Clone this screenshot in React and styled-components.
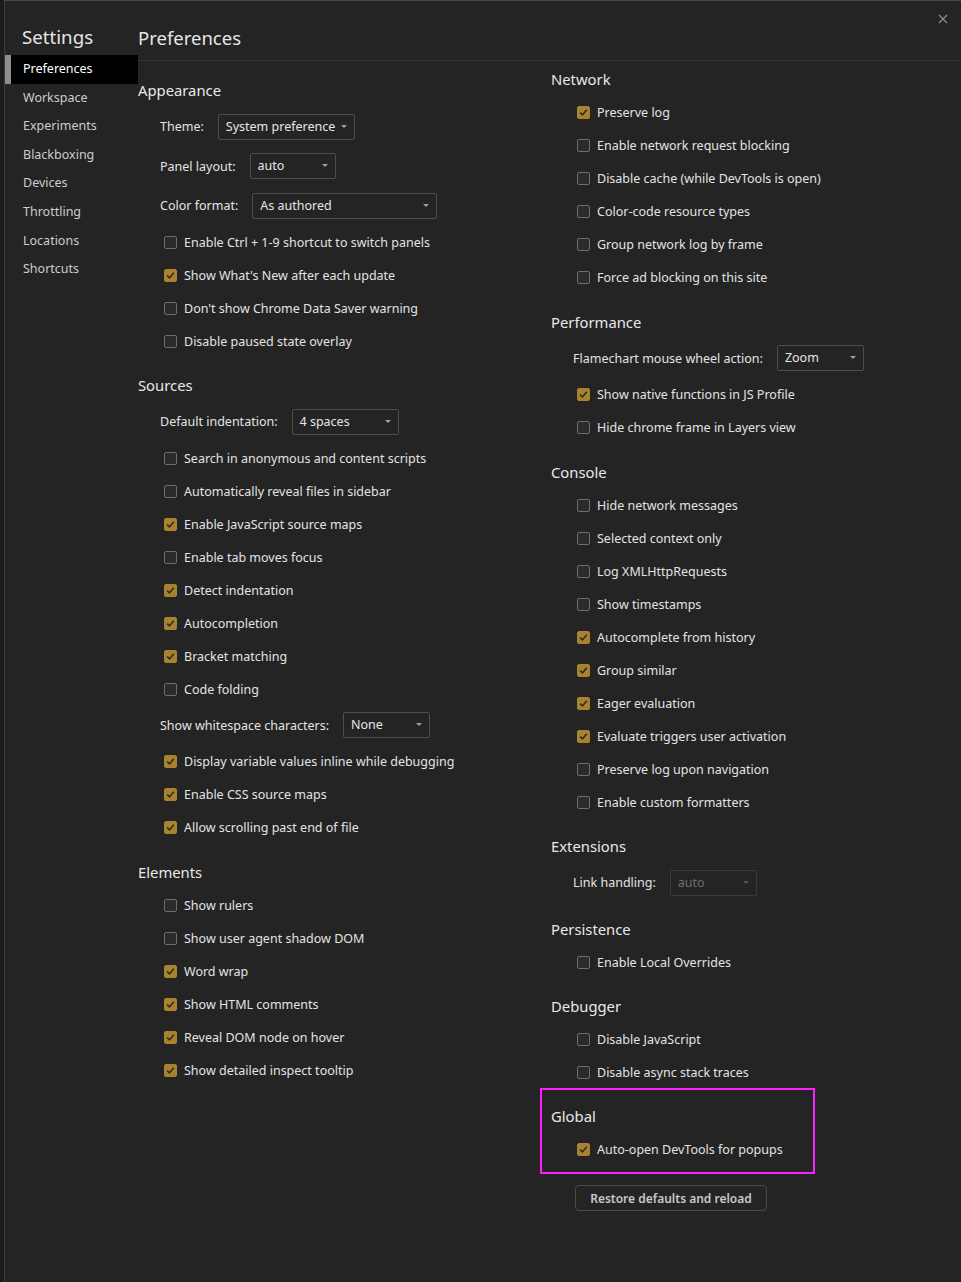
import styled, { createGlobalStyle } from "styled-components";

const GlobalStyle = createGlobalStyle`
  html, body {
    margin: 0;
    padding: 0;
    background: #1c1c1c;
  }
  body {
    font-family: "Noto Sans", "Open Sans", sans-serif;
    font-size: 12.5px;
    color: #e3e3e3;
  }
`;

const Window = styled.div`
  position: relative;
  margin-left: 4px;
  min-height: 1281px;
  background: #242424;
  border-top: 1px solid #4a4a4a;
  border-left: 1px solid #3c3c3c;
  display: flex;
`;

const Sidebar = styled.nav`
  width: 133px;
  flex: none;
`;

const SidebarTitle = styled.div`
  height: 54px;
  padding: 27px 0 0 17px;
  font-size: 18.7px;
  line-height: 1;
  color: #e6e6e6;
  box-sizing: border-box;
`;

const NavItem = styled.div`
  height: 28.6px;
  line-height: 28.6px;
  padding-left: ${(p) => (p.$active ? "12px" : "18px")};
  border-left: ${(p) => (p.$active ? "6px solid #8e8e8e" : "none")};
  background: ${(p) => (p.$active ? "#000" : "transparent")};
  color: ${(p) => (p.$active ? "#fff" : "#cdcdcd")};
`;

const Main = styled.main`
  flex: 1;
`;

const Header = styled.header`
  height: 60px;
  border-bottom: 1px solid #333;
  padding-top: 28px;
  font-size: 18.5px;
  line-height: 1;
  color: #e6e6e6;
  box-sizing: border-box;
`;

const CloseButton = styled.button`
  position: absolute;
  top: 12px;
  right: 12px;
  width: 12px;
  height: 12px;
  padding: 0;
  border: none;
  background: none;
  display: flex;
`;

const Columns = styled.div`
  display: grid;
  grid-template-columns: 413px 1fr;
`;

const Column = styled.div`
  padding-top: ${(p) => p.$top}px;
`;

const Section = styled.section`
  padding-top: ${(p) => (p.$tight ? "11.5px" : "12.5px")};
  ${Column} > &:first-child {
    padding-top: 0;
  }
  ${(p) =>
    p.$highlight &&
    `
    width: 275px;
    box-sizing: border-box;
    margin: -0.5px 0 0 -11px;
    padding: 11px 9px 6px 9px;
    border: 2px solid #ff1eff;
  `}
`;

const Title = styled.h3`
  margin: 0;
  font-size: 14.8px;
  font-weight: 400;
  line-height: 30px;
  padding-bottom: 2px;
  color: #e8e8e8;
`;

const CheckRow = styled.label`
  display: flex;
  align-items: center;
  height: 33px;
  padding-left: 26px;
  gap: 7px;
  color: #e3e3e3;
`;

const Box = styled.span`
  width: 13px;
  height: 13px;
  box-sizing: border-box;
  border-radius: 2px;
  flex: none;
  display: flex;
  align-items: center;
  justify-content: center;
  background: ${(p) => (p.$checked ? "#a9822f" : "#2b2b2b")};
  border: 1px solid ${(p) => (p.$checked ? "#a9822f" : "#6e6e6e")};
`;

const SelectRow = styled.div`
  display: flex;
  align-items: center;
  height: 39.5px;
  padding-left: 22px;
  gap: 14px;
  color: #e3e3e3;
`;

const Select = styled.div`
  position: relative;
  width: ${(p) => p.$width}px;
  height: 26px;
  box-sizing: border-box;
  border: 1px solid ${(p) => (p.$disabled ? "#3a3a3a" : "#4e4e4e")};
  border-radius: 2px;
  padding-left: 7px;
  line-height: 24px;
  color: ${(p) => (p.$disabled ? "#6e6e6e" : "#e6e6e6")};
  &::after {
    content: "";
    position: absolute;
    right: 7px;
    top: 10px;
    border-left: 3px solid transparent;
    border-right: 3px solid transparent;
    border-top: 3px solid ${(p) => (p.$disabled ? "#555" : "#a0a0a0")};
  }
`;

const Button = styled.button`
  margin: 11px 0 0 24px;
  width: 192px;
  height: 26px;
  border: 1px solid #4a4a4a;
  border-radius: 4px;
  background: #242424;
  color: #c8c8c8;
  font-family: inherit;
  font-size: 12px;
  font-weight: 600;
  padding: 0;
`;

function Check({ label, on }) {
  return (
    <CheckRow>
      <Box $checked={on}>
        {on && (
          <svg width="9" height="9" viewBox="0 0 9 9">
            <path d="M1.2 4.6 L3.5 6.9 L7.8 1.8" fill="none" stroke="#2a2a2a" strokeWidth="1.6" />
          </svg>
        )}
      </Box>
      {label}
    </CheckRow>
  );
}

function Dropdown({ label, value, width, disabled }) {
  return (
    <SelectRow>
      <span>{label}</span>
      <Select $width={width} $disabled={disabled}>
        {value}
      </Select>
    </SelectRow>
  );
}

function Row({ item }) {
  if (item.select) return <Dropdown label={item.select} value={item.value} width={item.w} disabled={item.disabled} />;
  return <Check label={item.label} on={item.on} />;
}

const left = [
  {
    title: "Appearance",
    items: [
      { select: "Theme:", value: "System preference", w: 137 },
      { select: "Panel layout:", value: "auto", w: 86 },
      { select: "Color format:", value: "As authored", w: 185 },
      { label: "Enable Ctrl + 1-9 shortcut to switch panels" },
      { label: "Show What's New after each update", on: true },
      { label: "Don't show Chrome Data Saver warning" },
      { label: "Disable paused state overlay" },
    ],
  },
  {
    title: "Sources",
    items: [
      { select: "Default indentation:", value: "4 spaces", w: 107 },
      { label: "Search in anonymous and content scripts" },
      { label: "Automatically reveal files in sidebar" },
      { label: "Enable JavaScript source maps", on: true },
      { label: "Enable tab moves focus" },
      { label: "Detect indentation", on: true },
      { label: "Autocompletion", on: true },
      { label: "Bracket matching", on: true },
      { label: "Code folding" },
      { select: "Show whitespace characters:", value: "None", w: 87 },
      { label: "Display variable values inline while debugging", on: true },
      { label: "Enable CSS source maps", on: true },
      { label: "Allow scrolling past end of file", on: true },
    ],
  },
  {
    title: "Elements",
    items: [
      { label: "Show rulers" },
      { label: "Show user agent shadow DOM" },
      { label: "Word wrap", on: true },
      { label: "Show HTML comments", on: true },
      { label: "Reveal DOM node on hover", on: true },
      { label: "Show detailed inspect tooltip", on: true },
    ],
  },
];

const right = [
  {
    title: "Network",
    items: [
      { label: "Preserve log", on: true },
      { label: "Enable network request blocking" },
      { label: "Disable cache (while DevTools is open)" },
      { label: "Color-code resource types" },
      { label: "Group network log by frame" },
      { label: "Force ad blocking on this site" },
    ],
  },
  {
    title: "Performance",
    items: [
      { select: "Flamechart mouse wheel action:", value: "Zoom", w: 87 },
      { label: "Show native functions in JS Profile", on: true },
      { label: "Hide chrome frame in Layers view" },
    ],
  },
  {
    title: "Console",
    items: [
      { label: "Hide network messages" },
      { label: "Selected context only" },
      { label: "Log XMLHttpRequests" },
      { label: "Show timestamps" },
      { label: "Autocomplete from history", on: true },
      { label: "Group similar", on: true },
      { label: "Eager evaluation", on: true },
      { label: "Evaluate triggers user activation", on: true },
      { label: "Preserve log upon navigation" },
      { label: "Enable custom formatters" },
    ],
  },
  {
    title: "Extensions",
    items: [{ select: "Link handling:", value: "auto", w: 87, disabled: true }],
  },
  {
    title: "Persistence",
    tight: true,
    items: [{ label: "Enable Local Overrides" }],
  },
  {
    title: "Debugger",
    tight: true,
    items: [{ label: "Disable JavaScript" }, { label: "Disable async stack traces" }],
  },
  {
    title: "Global",
    highlight: true,
    items: [{ label: "Auto-open DevTools for popups", on: true }],
  },
];

function Sections({ list }) {
  return list.map((s) => (
    <Section key={s.title} $highlight={s.highlight} $tight={s.tight}>
      <Title>{s.title}</Title>
      {s.items.map((it, i) => (
        <Row key={i} item={it} />
      ))}
    </Section>
  ));
}

const navItems = ["Preferences", "Workspace", "Experiments", "Blackboxing", "Devices", "Throttling", "Locations", "Shortcuts"];

export default function App() {
  return (
    <>
      <GlobalStyle />
      <Window>
        <Sidebar>
          <SidebarTitle>Settings</SidebarTitle>
          {navItems.map((n, i) => (
            <NavItem key={n} $active={i === 0}>
              {n}
            </NavItem>
          ))}
        </Sidebar>
        <Main>
          <Header>Preferences</Header>
          <Columns>
            <Column $top={14}>
              <Sections list={left} />
            </Column>
            <Column $top={3}>
              <Sections list={right} />
              <Button>Restore defaults and reload</Button>
            </Column>
          </Columns>
        </Main>
        <CloseButton aria-label="Close">
          <svg width="12" height="12" viewBox="0 0 12 12">
            <path d="M2 2 L10 10 M10 2 L2 10" stroke="#8a8a8a" strokeWidth="1.3" />
          </svg>
        </CloseButton>
      </Window>
    </>
  );
}
